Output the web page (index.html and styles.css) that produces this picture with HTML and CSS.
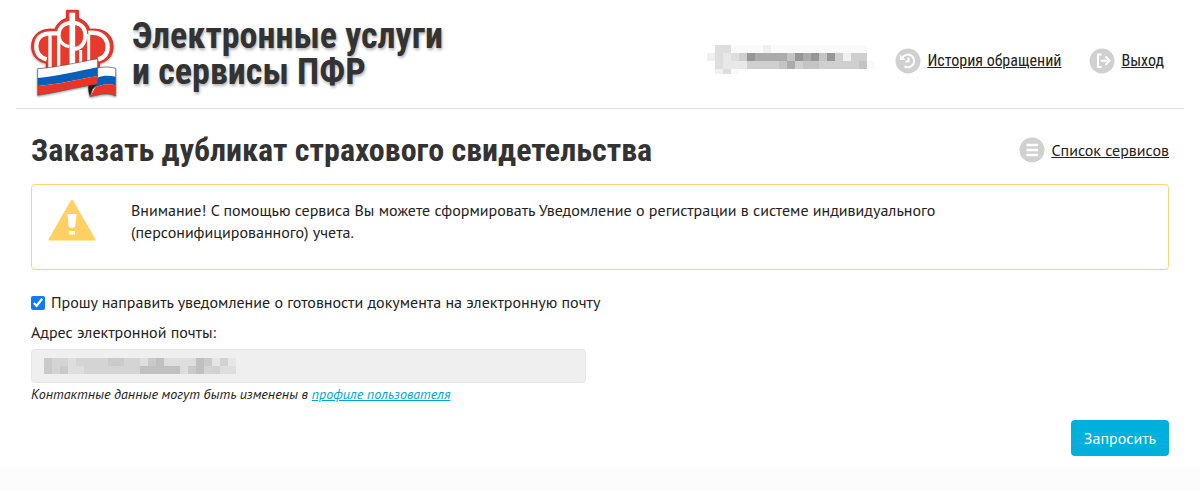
FILE: index.html
```html
<!DOCTYPE html>
<html lang="ru">

<head>
    <meta charset="UTF-8">
    <meta name="viewport" content="width=device-width, initial-scale=1.0">
    <title>Электронные услуги и сервисы ПФР</title>
    <link rel="stylesheet" href="styles.css">
</head>

<body>
    <div class="page">
        <header class="header">
            <a class="brand" href="#">
                <svg class="logo" viewBox="30 24 264 276" aria-hidden="true">
                    <path fill="#e83a2c" stroke="#d2281f" stroke-width="3" d="M140 31H175V55C194 61 204 74 209 88C254 83 279 106 279 139C279 169 262 184 238 189V210H79V189C51 184 35 166 35 139C35 104 62 83 105 88C110 73 121 61 140 55Z"/>
                    <g fill="none" stroke="#fff">
                        <path stroke-width="13" d="M80 178C58 172 49 160 49 140C49 112 66 100 94 100H112"/>
                        <path stroke-width="10" d="M90 104V206M116 102V206"/>
                        <path stroke-width="12" d="M116 106C116 80 134 68 157 68C180 68 196 82 196 106C196 128 184 144 165 147"/>
                        <path stroke-width="10" d="M116 106C118 124 128 136 148 140"/>
                        <path stroke-width="13" d="M205 99C240 94 263 112 263 140C263 162 250 174 234 178"/>
                        <path stroke-width="9" d="M206 102V190M182 150V200"/>
                        <path stroke-width="17" d="M157 38V206"/>
                    </g>
                    <path fill="#fff" d="M53 206C95 205 180 186 233 176V204C250 200 268 200 287 205V288C262 276 240 284 210 290L206 256C160 264 105 278 53 286Z"/>
                    <path fill="#075fb8" d="M53 234C105 231 175 213 233 202V228C175 238 110 254 53 258ZM233 233C250 225 268 226 287 230V256C266 250 248 252 226 262Z"/>
                    <path fill="#eb3426" d="M53 258C110 254 175 238 233 228V252C170 262 105 278 53 286ZM226 262C248 252 266 250 287 256V288C262 276 240 284 210 290Z"/>
                    <path fill="#29191a" d="M205 256L233 252L218 268L210 290C205 278 204 267 205 256Z"/>
                    <path fill="none" stroke="#555" stroke-width="2" d="M53 206C95 205 180 186 233 176V252C170 262 105 278 53 286ZM233 204C250 200 268 200 287 205V288C262 276 240 284 210 290L218 268L233 252"/>
                </svg>
                <span class="brand-name">Электронные услуги<br>и сервисы ПФР</span>
            </a>
            <nav class="user-nav">
                <svg class="user-name" viewBox="0 0 168 32" role="img" aria-label="Пользователь" shape-rendering="crispEdges">
                    <path fill="#fafafa" d="M24 0h136v8H24zM160 16h8v8h-8zM24 24h8v5h-8z"/>
                    <path fill="#f0f0f0" d="M0 8h8v8H0zM56 0h8v8h-8zM136 8h8v8h-8zM8 24h8v5H8z"/>
                    <path fill="#dedede" d="M8 0h16v24H8zM24 8h8v8h-8zM16 24h8v5h-8z"/>
                    <path fill="#e8e8e8" d="M16 8h8v16h-8zM24 16h16v8H24z"/>
                    <path fill="#cfcfcf" d="M32 8h8v8h-8zM40 16h120v8H40zM128 8h8v8h-8zM144 8h16v8h-16z"/>
                    <path fill="#ababab" d="M40 8h88v8H40zM80 16h8v8h-8z"/>
                    <path fill="#c4c4c4" d="M80 8h8v8h-8zM112 8h8v8h-8zM72 16h8v8h-8zM96 16h16v8H96zM152 16h8v8h-8z"/>
                    <path fill="#969696" d="M40 8h8v8h-8zM88 8h8v8h-8zM104 8h8v8h-8zM120 8h8v8h-8z"/>
                </svg>
                <a class="icon-link" href="#">
                    <svg class="icon" viewBox="0 0 26 26" aria-hidden="true">
                        <circle cx="13" cy="13" r="12.5" fill="#d0d0d0"/>
                        <path fill="none" stroke="#fff" stroke-width="2" d="M7.3 10A6.3 6.3 0 1 1 9.4 18.2M13.5 9.5V13.5H10.5"/>
                        <path fill="#fff" d="M4.8 6.5V12H10.5Z"/>
                    </svg>
                    <span>История обращений</span>
                </a>
                <a class="icon-link" href="#">
                    <svg class="icon" viewBox="0 0 26 26" aria-hidden="true">
                        <circle cx="13" cy="13" r="12.5" fill="#d0d0d0"/>
                        <path fill="none" stroke="#fff" stroke-width="2" d="M12.5 6.5H9V19H12.5M12 12.8H20M16.5 8.5L20.5 12.8L16.5 17"/>
                    </svg>
                    <span>Выход</span>
                </a>
            </nav>
        </header>

        <main class="content">
            <div class="title-row">
                <h1>Заказать дубликат страхового свидетельства</h1>
                <a class="icon-link" href="#">
                    <svg class="icon" viewBox="0 0 26 26" aria-hidden="true">
                        <circle cx="13" cy="13" r="12.5" fill="#d0d0d0"/>
                        <path fill="none" stroke="#fff" stroke-width="2.6" d="M7.5 8H19M7.5 13H19M7.5 18H19"/>
                    </svg>
                    <span>Список сервисов</span>
                </a>
            </div>

            <div class="warning">
                <svg class="warning-icon" viewBox="0 0 48 42" aria-hidden="true">
                    <path fill="#ffd162" stroke="#ffd162" stroke-width="2" stroke-linejoin="round" d="M24 1.5L46.5 40.5H1.5Z"/>
                    <path fill="#fff" d="M19.5 15H28.5L27.3 27Q27 29 24 29Q21 29 20.7 27ZM21 32H27V35.5H21Z"/>
                </svg>
                <p>Внимание! С помощью сервиса Вы можете сформировать Уведомление о регистрации в системе индивидуального (персонифицированного) учета.</p>
            </div>

            <form class="request-form">
                <div class="check-row">
                    <input type="checkbox" id="notify" checked>
                    <label for="notify">Прошу направить уведомление о готовности документа на электронную почту</label>
                </div>
                <label for="email">Адрес электронной почты:</label>
                <div class="email-field">
                    <input type="email" id="email" disabled>
                    <svg class="email-value" viewBox="0 0 192 16" aria-hidden="true" shape-rendering="crispEdges">
                        <path fill="#d4d4d4" d="M0 0h24v16H0zM32 0h64v8H32zM40 8h56v8H40zM104 0h8v8h-8zM144 0h8v16h-8zM160 0h8v16h-8z"/>
                        <path fill="#dedede" d="M24 0h8v8h-8zM24 8h16v8H24zM96 0h8v8h-8zM120 0h32v8h-32zM136 8h8v8h-8zM168 0h24v16h-24z"/>
                        <path fill="#cacaca" d="M0 0h8v16H0zM16 8h8v8h-8zM64 0h16v8H64zM104 0h8v8h-8zM144 8h8v8h-8zM160 0h8v8h-8z"/>
                        <path fill="#c0c0c0" d="M96 8h40v8H96zM112 0h8v8h-8zM152 0h8v16h-8z"/>
                        <path fill="#d2d2d2" d="M176 0h8v8h-8zM168 8h8v8h-8z"/>
                        <path fill="#e6e6e6" d="M168 0h8v8h-8zM184 0h8v8h-8z"/>
                    </svg>
                </div>
                <p class="hint">Контактные данные могут быть изменены в <a href="#">профиле пользователя</a></p>
                <button class="submit" type="button">Запросить</button>
            </form>
        </main>
    </div>
</body>

</html>
```

FILE: styles.css
```css
body {
    margin: 0;
    background-color: #fcfcfc;
    font-family: 'PT Sans', Lato, sans-serif;
    font-size: 16px;
    line-height: 22px;
    color: #222;
}

.page {
    padding: 0 16px 12px;
    background-color: #fff;
}

a {
    color: #222;
}

.header {
    display: flex;
    justify-content: space-between;
    padding: 8px 20px 8px 14px;
    border-bottom: 1px solid #ddd;
    font-family: 'Roboto Condensed', 'Liberation Sans Narrow', sans-serif;
}

.brand {
    display: flex;
    gap: 14px;
    color: #333;
    text-decoration: none;
}

.logo {
    width: 88px;
    height: 92px;
    filter: drop-shadow(0 1px 1px rgba(0, 0, 0, 0.4));
}

.brand-name {
    padding-top: 10px;
    font-size: 36px;
    font-weight: bold;
    line-height: 36px;
    text-shadow: 1px 2px 3px rgba(0, 0, 0, 0.3);
}

.user-nav {
    display: flex;
    align-items: center;
    gap: 28px;
    padding-top: 14px;
}

.user-name {
    width: 168px;
    height: 32px;
    margin-right: -8px;
}

.icon-link {
    display: flex;
    align-items: center;
    gap: 6px;
    white-space: nowrap;
}

.icon {
    width: 26px;
    height: 26px;
}

.content {
    padding: 23px 15px 0;
}

.title-row {
    display: flex;
    justify-content: space-between;
    align-items: center;
    margin-bottom: 16px;
}

h1 {
    margin: 0;
    font-family: 'Roboto Condensed', 'Liberation Sans Narrow', sans-serif;
    font-size: 32px;
    line-height: 36px;
    color: #333;
}

.warning {
    display: flex;
    align-items: flex-start;
    gap: 35px;
    padding: 14px 16px 26px;
    border: 1px solid #ffd37a;
    border-radius: 4px;
}

.warning-icon {
    flex: none;
    width: 48px;
    height: 42px;
}

.warning p {
    max-width: 840px;
    margin: 0;
}

.request-form {
    display: flex;
    flex-direction: column;
    align-items: flex-start;
    padding-top: 21px;
}

.check-row {
    display: flex;
    align-items: center;
    gap: 6px;
    margin-bottom: 8px;
}

.check-row input {
    width: 14px;
    height: 14px;
    margin: 2px 0 0;
    accent-color: #0a7aff;
}

.email-field {
    position: relative;
    width: 50%;
    max-width: 555px;
    margin-top: 6px;
}

.email-field input {
    display: block;
    box-sizing: border-box;
    width: 100%;
    height: 34px;
    border: 1px solid #e3e6ea;
    border-radius: 4px;
    background-color: #efefef;
}

.email-value {
    position: absolute;
    top: 9px;
    left: 13px;
    width: 192px;
    height: 16px;
}

.hint {
    margin: 0 0 15px;
    font-size: 14px;
    font-style: italic;
}

.hint a {
    color: #00a5d4;
}

.submit {
    align-self: flex-end;
    padding: 7px 13px;
    border: none;
    border-radius: 4px;
    background-color: #00b0dc;
    color: #fff;
    font-family: inherit;
    font-size: 16px;
    line-height: 22px;
    cursor: pointer;
}
```
